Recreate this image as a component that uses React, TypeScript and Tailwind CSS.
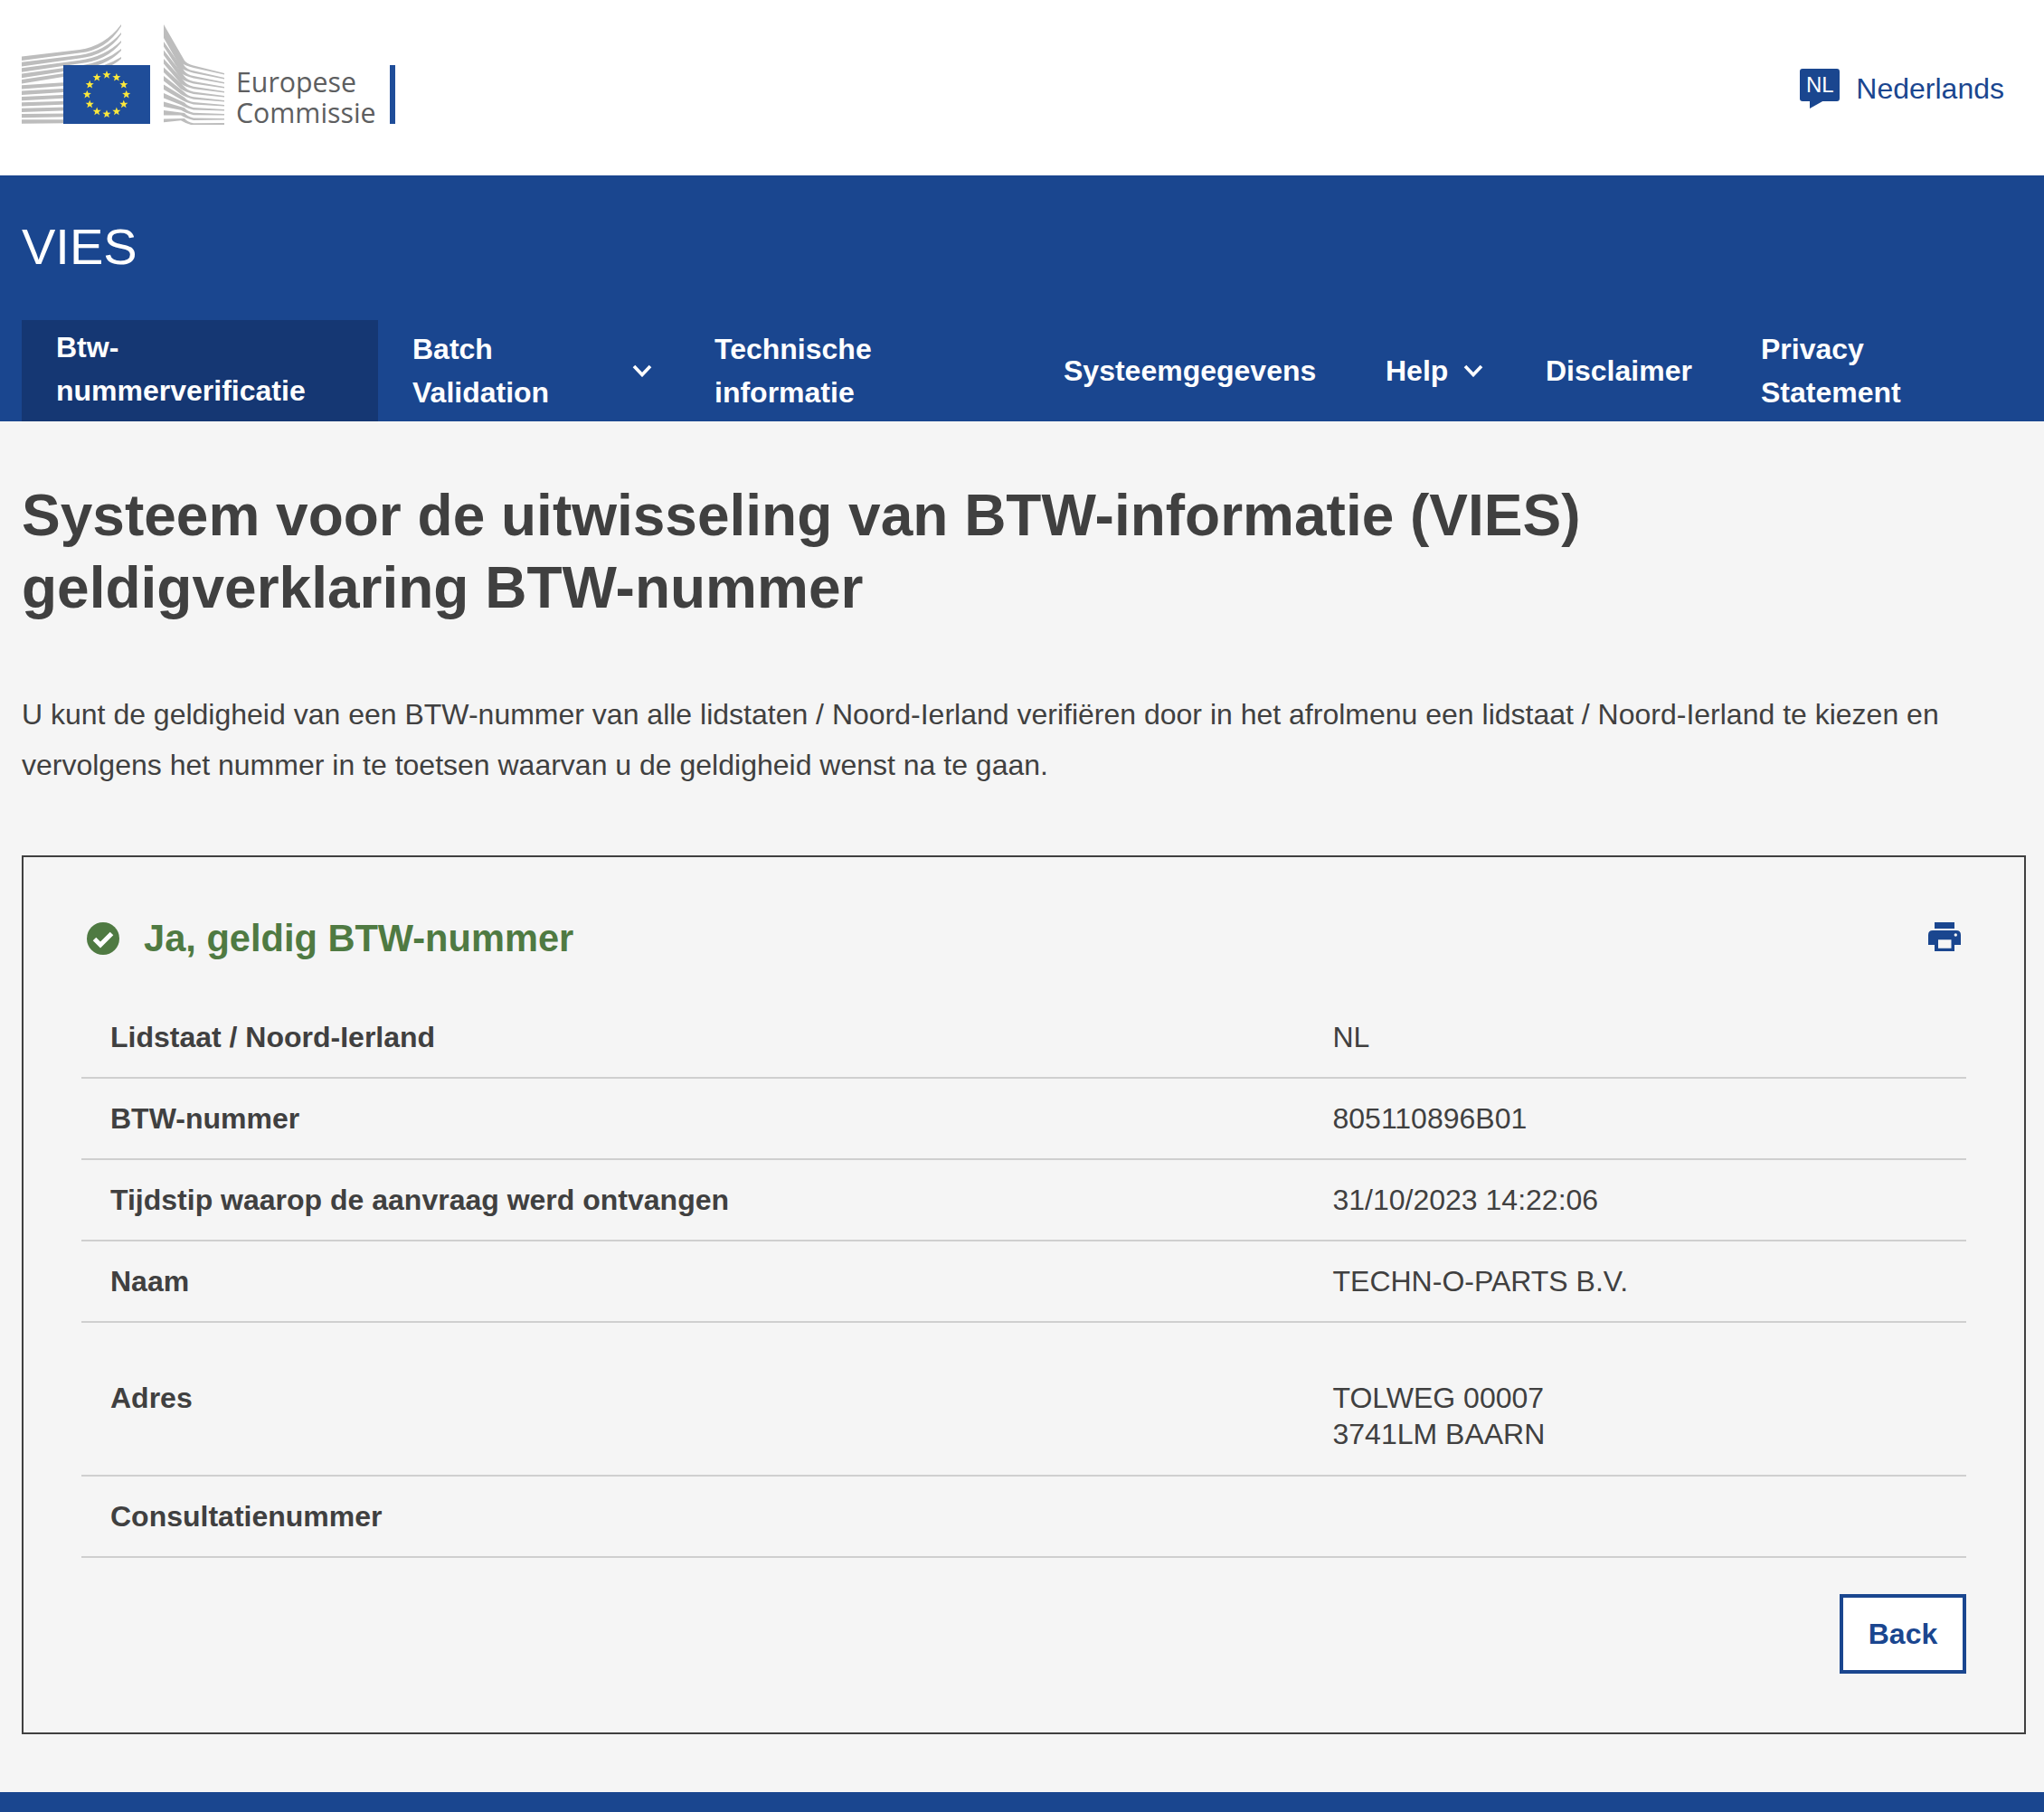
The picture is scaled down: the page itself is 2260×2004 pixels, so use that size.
import React from "react";

const star = (cx: number, cy: number, r: number) => {
  const pts: string[] = [];
  for (let i = 0; i < 10; i++) {
    const a = -Math.PI / 2 + (i * Math.PI) / 5;
    const rr = i % 2 === 0 ? r : r * 0.42;
    pts.push(`${(cx + rr * Math.cos(a)).toFixed(2)},${(cy + rr * Math.sin(a)).toFixed(2)}`);
  }
  return pts.join(" ");
};

function Logo() {
  const left = Array.from({ length: 12 }, (_, i) => i);
  const right = Array.from({ length: 12 }, (_, i) => i);
  const stars = Array.from({ length: 12 }, (_, i) => i);
  return (
    <div className="flex items-start">
      <svg width="224" height="111" viewBox="24 27 224 111" className="block shrink-0">
        <g fill="#bdbdbd">
          {left.map((i) => {
            const yL = 62.5 + 6.35 * i;
            if (i < 5) {
              const yM = 55 + 5.9 * i;
              const yR = 27 + 9 * i;
              return (
                <path
                  key={i}
                  d={`M24 ${yL} L88 ${yM} Q116 ${yM - 4} 134 ${yR} L134 ${yR + 2} Q118 ${yM + 0.5} 88 ${yM + 3.5} L24 ${yL + 4.6} Z`}
                />
              );
            }
            const y2 = yL - 6 * (1 - i / 11);
            return <path key={i} d={`M24 ${yL} L74 ${y2} L74 ${y2 + 3.8} L24 ${yL + 4.3} Z`} />;
          })}
          {right.map((i) => {
            const yL = 27 + 9.5 * i;
            const t = i === 0 ? 10.5 : i === 11 ? 3.8 : 5.6;
            const ky = 70.5 + 5.8 * i;
            const yR = 81 + 5 * i;
            const tR = i === 11 ? 2.8 : 1.6;
            return (
              <path
                key={i}
                d={`M181 ${yL} L204 ${ky - 3.4} Q207 ${ky + 0.2} 214 ${ky + 2} L248 ${yR} L248 ${yR + tR} L214 ${ky + 4.5} Q205 ${ky + 2.2} 200 ${ky - 1} L181 ${yL + t} Z`}
              />
            );
          })}
        </g>
        <rect x="70" y="72" width="96" height="65" fill="#1f4d99" />
        {stars.map((i) => {
          const a = (i * Math.PI) / 6;
          return (
            <polygon
              key={i}
              points={star(118 + 21.7 * Math.sin(a), 104.5 - 21.7 * Math.cos(a), 4.8)}
              fill="#fbe83c"
            />
          );
        })}
      </svg>
      <div className="ml-[13px] mt-[47px] w-[170px] text-[30.3px] leading-[34px] font-medium text-[#5d5e60] [font-family:'Open_Sans',sans-serif]">
        Europese
        <br />
        Commissie
      </div>
      <div className="mt-[45px] w-[6px] h-[65px] bg-[#1f4d99]" />
    </div>
  );
}

function Chevron() {
  return (
    <svg width="22" height="14" viewBox="0 0 22 14" className="block shrink-0">
      <path d="M2 2 L11 11.5 L20 2" fill="none" stroke="#ffffff" strokeWidth="3.6" />
    </svg>
  );
}

function PrintIcon() {
  return (
    <svg width="36" height="32" viewBox="0 0 36 32" className="block shrink-0">
      <path
        fill="#1a468f"
        fillRule="evenodd"
        d="M7 0H29V7H7Z M5 9H31Q36 9 36 14V25H29V32H7V25H0V14Q0 9 5 9Z M11 19.3V28.7H25.5V19.3Z M30.3 12.3A1.7 1.7 0 1 0 30.3 15.7A1.7 1.7 0 1 0 30.3 12.3Z"
      />
    </svg>
  );
}

function CheckIcon() {
  return (
    <svg width="36" height="36" viewBox="0 0 36 36" className="block shrink-0">
      <circle cx="18" cy="18" r="18" fill="#4f7a42" />
      <path d="M8.5 18.5 L15 25 L27.5 12.5" fill="none" stroke="#ffffff" strokeWidth="5" />
    </svg>
  );
}

const rows = [
  { label: "Lidstaat / Noord-Ierland", value: ["NL"] },
  { label: "BTW-nummer", value: ["805110896B01"] },
  { label: "Tijdstip waarop de aanvraag werd ontvangen", value: ["31/10/2023 14:22:06"] },
  { label: "Naam", value: ["TECHN-O-PARTS B.V."] },
];

function Row({ label, value, tall }: { label: string; value: string[]; tall?: boolean }) {
  return (
    <div
      className={
        tall
          ? "flex border-b-2 border-[#cfcfcf] pt-[63px] pb-[25px] leading-[40px]"
          : "flex border-b-2 border-[#cfcfcf] py-[24px] leading-[40px] min-h-[90px]"
      }
    >
      <div className="w-[1351px] pl-[32px] font-bold">{label}</div>
      <div className="pl-[32.5px]">
        {value.map((v) => (
          <div key={v}>{v}</div>
        ))}
      </div>
    </div>
  );
}

export default function App() {
  return (
    <div className="w-[2260px] h-[2004px] bg-[#f5f5f5] text-[#404040] text-[32px] [font-family:'Liberation_Sans',Arial,sans-serif]">
      <header className="h-[194px] bg-white flex justify-between items-start pt-[27px] pl-[24px] pr-[44px]">
        <Logo />
        <div className="flex items-start mt-[49px] text-[#1a468f]">
          <div className="relative w-[44px] h-[36px] bg-[#1a468f] rounded-[3px] flex items-center justify-center text-white text-[24px] leading-none">
            NL
            <svg width="16" height="9" viewBox="0 0 16 9" className="absolute left-[11px] top-[35px]">
              <path d="M0 0H16L0 9Z" fill="#1a468f" />
            </svg>
          </div>
          <span className="ml-[18px] leading-[36px] mt-[4px]">Nederlands</span>
        </div>
      </header>

      <div className="h-[272px] bg-[#1a468f] text-white pl-[24px] pr-[24px] pt-[47px]">
        <div className="text-[56px] leading-[64px]">VIES</div>
        <nav className="mt-[49px] flex h-[112px] font-bold leading-[48px]">
          <div className="w-[394px] pl-[38px] pt-[6px] bg-[#153773]">
            Btw-
            <br />
            nummerverificatie
          </div>
          <div className="w-[334px] pl-[38px] py-[8px] flex items-center">
            <span className="w-[243px]">
              Batch
              <br />
              Validation
            </span>
            <Chevron />
          </div>
          <div className="w-[386px] pl-[38px] py-[8px]">
            Technische
            <br />
            informatie
          </div>
          <div className="w-[353px] pl-[38px] flex items-center">Systeemgegevens</div>
          <div className="w-[180px] pl-[41px] flex items-center gap-[17px]">
            Help
            <Chevron />
          </div>
          <div className="w-[238px] pl-[38px] flex items-center">Disclaimer</div>
          <div className="flex-1 pl-[38px] py-[8px]">
            Privacy
            <br />
            Statement
          </div>
        </nav>
      </div>

      <main className="pl-[24px] pr-[20px] pt-[64px]">
        <h1 className="text-[64px] leading-[80px] font-bold">
          Systeem voor de uitwisseling van BTW-informatie (VIES)
          <br />
          geldigverklaring BTW-nummer
        </h1>
        <p className="mt-[72px] leading-[56px]">
          U kunt de geldigheid van een BTW-nummer van alle lidstaten / Noord-Ierland verifiëren door in het afrolmenu een lidstaat / Noord-Ierland te kiezen en
          <br />
          vervolgens het nummer in te toetsen waarvan u de geldigheid wenst na te gaan.
        </p>
        <section className="mt-[72px] h-[972px] border-2 border-[#404040] pt-[72px] px-[64px]">
          <div className="flex items-center h-[36px] px-[6px]">
            <CheckIcon />
            <h2 className="ml-[27px] flex-1 text-[41.6px] leading-[36px] font-bold text-[#4f7a42] -mt-[1px]">Ja, geldig BTW-nummer</h2>
            <div className="-mt-[4px]">
              <PrintIcon />
            </div>
          </div>
          <div className="mt-[47px]">
            {rows.map((r) => (
              <Row key={r.label} label={r.label} value={r.value} />
            ))}
            <Row label="Adres" value={["TOLWEG 00007", "3741LM BAARN"]} tall />
            <Row label="Consultatienummer" value={[]} />
          </div>
          <div className="mt-[40px] flex justify-end">
            <button className="w-[140px] h-[88px] border-4 border-[#1a468f] bg-white text-[#1a468f] font-bold">Back</button>
          </div>
        </section>
      </main>
      <footer className="mt-[64px] h-[22px] bg-[#1a468f]" />
    </div>
  );
}
